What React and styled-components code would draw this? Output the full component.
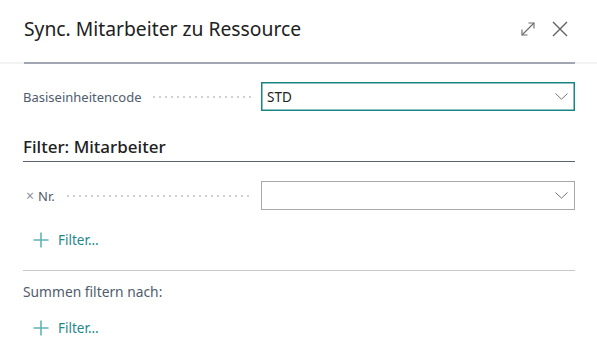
import React from "react";
import styled, { createGlobalStyle } from "styled-components";

const Global = createGlobalStyle`
  html, body { margin: 0; padding: 0; background: #ffffff; }
  body { font-family: "Noto Sans", "Open Sans", sans-serif; }
  * { box-sizing: border-box; }
`;

const Dialog = styled.div`
  width: 597px;
  height: 347px;
  background: #fff;
  overflow: hidden;
`;

const Header = styled.div`
  height: 62px;
  display: flex;
  align-items: center;
  justify-content: space-between;
  padding: 0 29px 0 24px;
`;

const Title = styled.h1`
  margin: 0;
  font-size: 19.3px;
  font-weight: 400;
  color: #212121;
  line-height: 26px;
  padding-bottom: 4px;
`;

const HeaderActions = styled.div`
  display: flex;
  align-items: center;
  gap: 16px;
  padding-bottom: 5px;
`;

const IconButton = styled.button`
  border: 0;
  background: transparent;
  padding: 0;
  width: 16px;
  height: 16px;
  display: flex;
  align-items: center;
  justify-content: center;
  color: #616161;
  cursor: pointer;
`;

const HeaderRule = styled.div`
  height: 2px;
  background: #f3f3f3;
  padding: 0 22px 0 24px;
  &::after {
    content: "";
    display: block;
    height: 2px;
    background: #a2a6b2;
  }
`;

const Body = styled.div`
  padding: 18px 22px 0 23px;
`;

const FieldRow = styled.div`
  display: grid;
  grid-template-columns: 238px 1fr;
  height: 29px;
  align-items: center;
`;

const LabelCell = styled.div`
  display: flex;
  align-items: center;
  padding-right: 10px;
  min-width: 0;
`;

const Label = styled.span`
  font-size: 13px;
  color: #505c6d;
  white-space: nowrap;
  display: flex;
  align-items: center;
`;

const ClearMark = styled.span`
  font-size: 14px;
  color: #8a94a2;
  margin: 0 4px 0 3px;
`;

const Leader = styled.span`
  flex: 1;
  height: 2px;
  margin-left: 10px;
  margin-top: 1px;
  background-image: radial-gradient(circle, #d0d0d0 0.9px, transparent 1.1px);
  background-size: 6px 2px;
  background-repeat: repeat-x;
`;

const Select = styled.div`
  height: 29px;
  border: 1px solid ${(p) => (p.$focused ? "#1b8486" : "#a8a8a8")};
  ${(p) => p.$focused && "box-shadow: inset 0 0 0 0.5px #1b8486;"}
  display: flex;
  align-items: center;
  justify-content: space-between;
  padding: 0 6px 0 5px;
  font-size: 13.5px;
  color: #212121;
`;

const Chevron = () => (
  <svg width="13" height="7" viewBox="0 0 13 7" fill="none">
    <path d="M0.5 0.5 L6.5 6.2 L12.5 0.5" stroke="#767676" strokeWidth="1" />
  </svg>
);

const SectionHeading = styled.h2`
  margin: 24px 0 0;
  font-size: 17px;
  font-weight: 500;
  color: #212121;
  line-height: 24px;
  padding-bottom: 2px;
  border-bottom: 1px solid #5c6170;
`;

const Spacer = styled.div`
  height: ${(p) => p.$h}px;
`;

const AddFilter = styled.button`
  display: flex;
  align-items: center;
  gap: 9px;
  border: 0;
  background: transparent;
  padding: 0 0 0 10px;
  height: 20px;
  font-family: inherit;
  font-size: 13.5px;
  color: #1f8a8a;
  cursor: pointer;
`;

const Plus = () => (
  <svg width="16" height="16" viewBox="0 0 16 16">
    <path d="M8 0.5 V15.5 M0.5 8 H15.5" stroke="#62b4b4" strokeWidth="1.6" />
  </svg>
);

const Divider = styled.div`
  height: 1px;
  background: #c8c8cc;
`;

const SubLabel = styled.div`
  font-size: 13.8px;
  color: #505c6d;
  line-height: 20px;
`;

export default function App() {
  return (
    <>
      <Global />
      <Dialog>
        <Header>
          <Title>Sync. Mitarbeiter zu Ressource</Title>
          <HeaderActions>
            <IconButton aria-label="Erweitern">
              <svg width="16" height="16" viewBox="0 0 16 16" fill="none" stroke="#6a6a6a" strokeWidth="1.1">
                <path d="M2 14 L14 2" />
                <path d="M8.5 2 H14 V7.5" />
                <path d="M2 8.5 V14 H7.5" />
              </svg>
            </IconButton>
            <IconButton aria-label="Schließen">
              <svg width="16" height="16" viewBox="0 0 16 16" fill="none" stroke="#616161" strokeWidth="1.4">
                <path d="M1 1 L15 15 M15 1 L1 15" />
              </svg>
            </IconButton>
          </HeaderActions>
        </Header>
        <HeaderRule />
        <Body>
          <FieldRow>
            <LabelCell>
              <Label>Basiseinheitencode</Label>
              <Leader />
            </LabelCell>
            <Select $focused>
              <span>STD</span>
              <Chevron />
            </Select>
          </FieldRow>
          <SectionHeading>Filter: Mitarbeiter</SectionHeading>
          <Spacer $h={19} />
          <FieldRow>
            <LabelCell>
              <Label>
                <ClearMark>×</ClearMark>Nr.
              </Label>
              <Leader />
            </LabelCell>
            <Select>
              <span />
              <Chevron />
            </Select>
          </FieldRow>
          <Spacer $h={20} />
          <AddFilter>
            <Plus />
            Filter...
          </AddFilter>
          <Spacer $h={20} />
          <Divider />
          <Spacer $h={11} />
          <SubLabel>Summen filtern nach:</SubLabel>
          <Spacer $h={16} />
          <AddFilter>
            <Plus />
            Filter...
          </AddFilter>
        </Body>
      </Dialog>
    </>
  );
}
